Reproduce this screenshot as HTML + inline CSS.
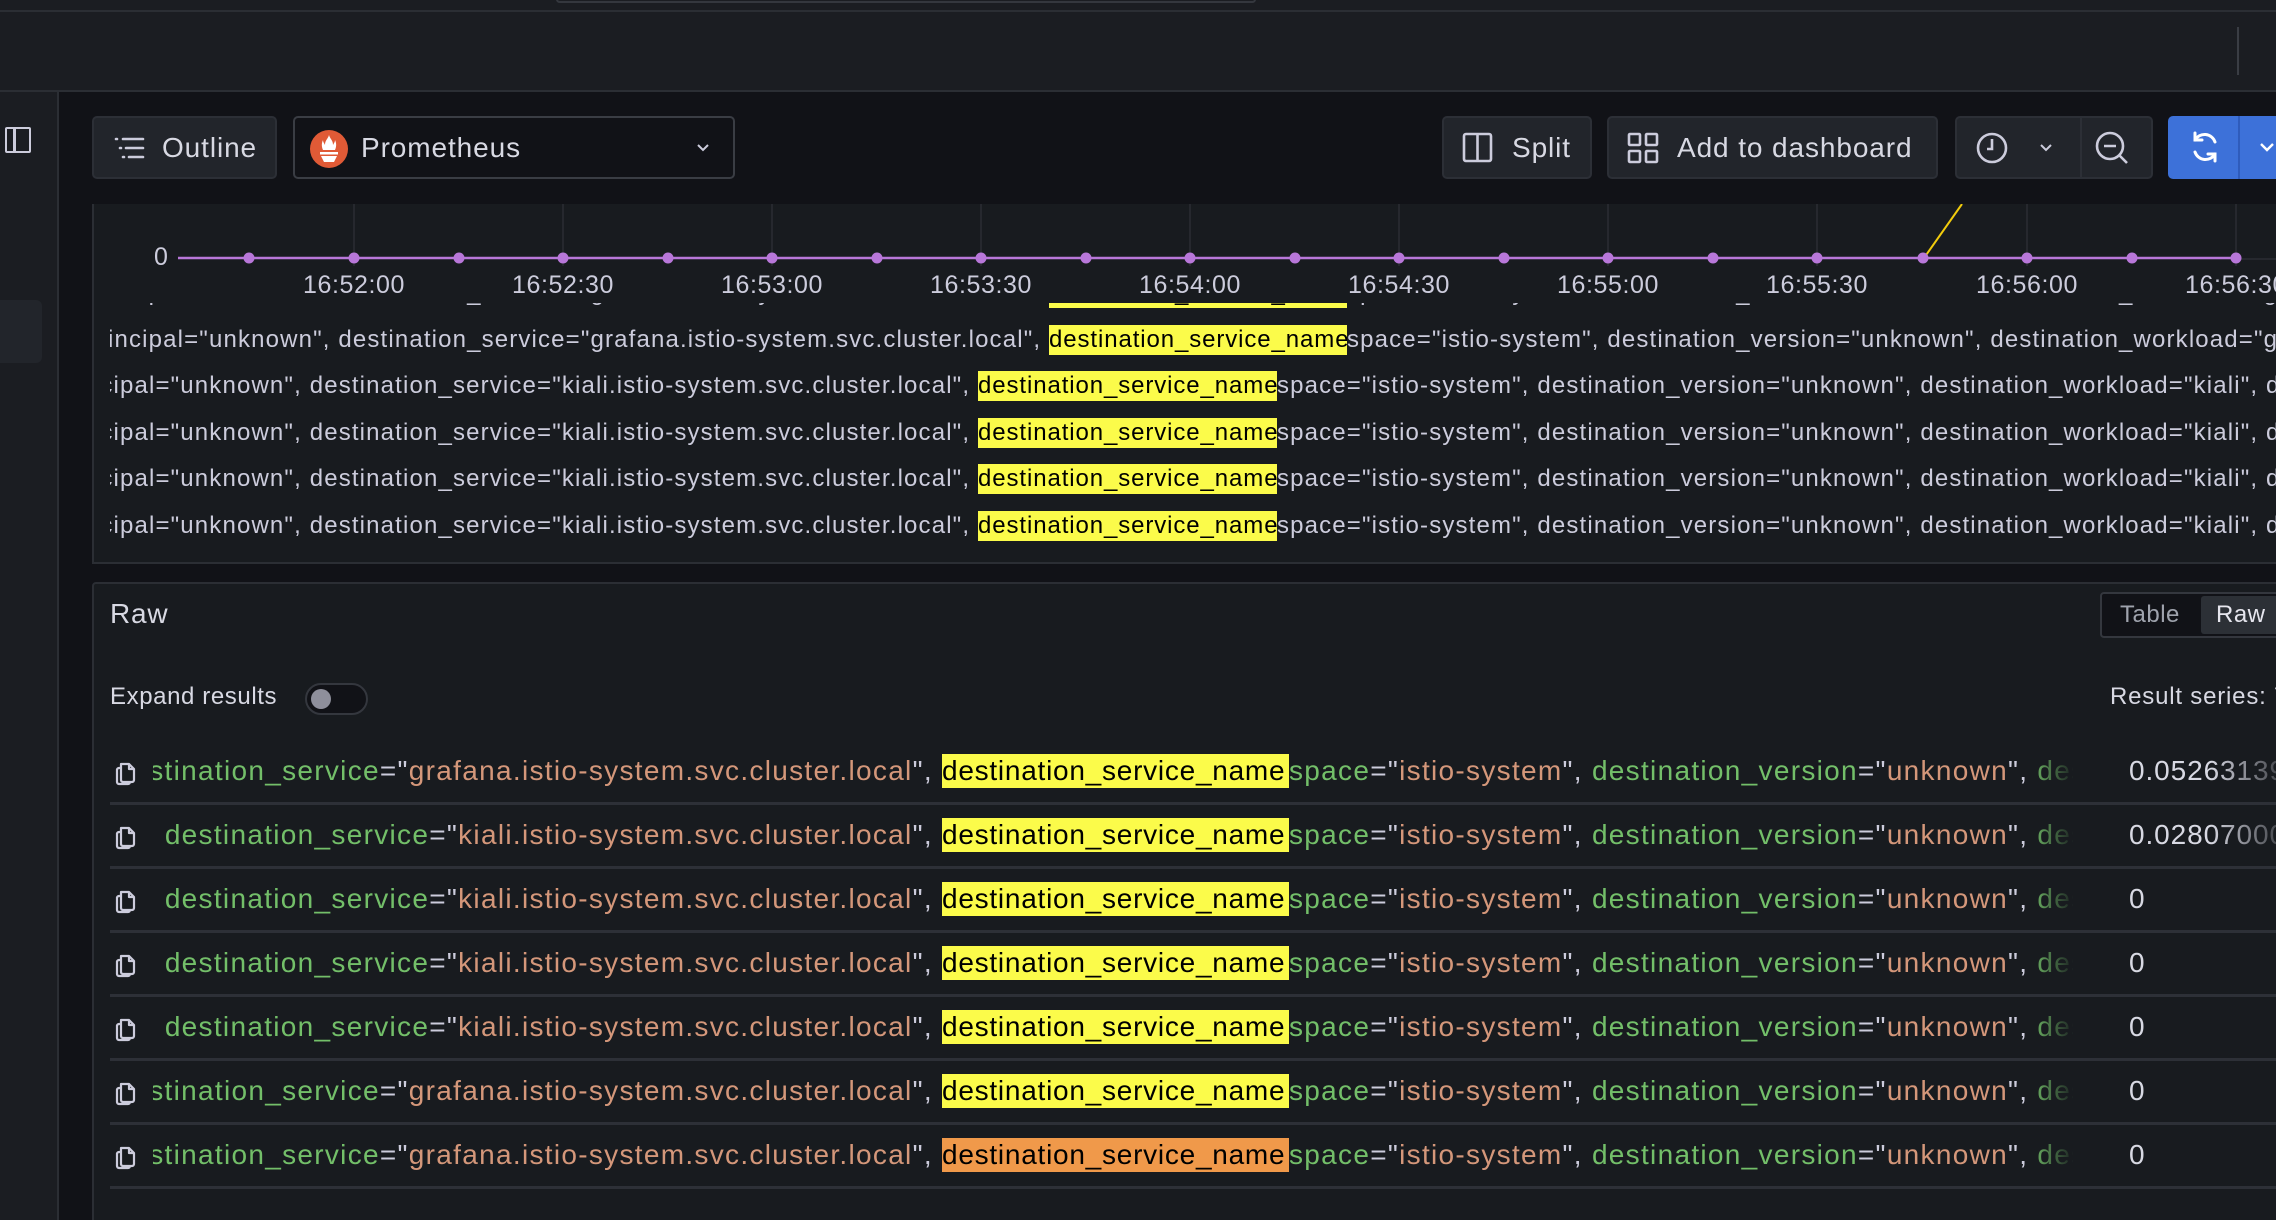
<!DOCTYPE html>
<html><head><meta charset="utf-8">
<style>
*{margin:0;padding:0;box-sizing:border-box}
html,body{width:2276px;height:1220px;overflow:hidden}
body{background:#111217;font-family:"Liberation Sans",sans-serif;color:#ccccdc;position:relative}
.a{position:absolute}
.btn{position:absolute;top:116px;height:63px;background:#22252b;border:2px solid #2c2f36;border-radius:5px;font-size:28px;color:#d8d9e3;letter-spacing:.9px}
.t{position:absolute;white-space:nowrap;overflow:hidden}
.lg{font-size:24px;letter-spacing:1.15px;color:#ccccdc;height:30px;line-height:30px}
.hl{background:#fbfb4a;color:#000;letter-spacing:.9px}
.rw{font-size:28px;letter-spacing:1.3px;height:34px;line-height:34px}
.rw.h2{letter-spacing:.75px}
.g{color:#73bf69}.v{color:#d4977a}.e{color:#ccccdc}
.sep{position:absolute;left:110px;right:0;height:3px;background:#2d3037}
.tick{position:absolute;top:271px;font-size:25px;color:#ccccdc;letter-spacing:.6px;transform:translateX(-50%)}
.val{position:absolute;left:2129px;font-size:28px;color:#d8d9e3;letter-spacing:.9px;white-space:nowrap}
</style></head><body>
<div class="a" style="left:0;top:0;width:2276px;height:92px;background:#1b1d22"></div>
<div class="a" style="left:556px;top:-4px;width:700px;height:7px;border:2px solid #34373e;border-radius:4px"></div>
<div class="a" style="left:0;top:10px;width:2276px;height:2px;background:#2b2e34"></div>
<div class="a" style="left:0;top:90px;width:2276px;height:2px;background:#2b2e34"></div>
<div class="a" style="left:2237px;top:27px;width:2px;height:48px;background:#3a3d44"></div>
<div class="a" style="left:0;top:92px;width:59px;height:1128px;background:#1b1d22;border-right:2px solid #2b2e34"></div>
<div class="a" style="left:5px;top:127px;width:26px;height:26px;border:2.5px solid #ccccdc;border-radius:2px"></div>
<div class="a" style="left:13px;top:128px;width:2.5px;height:24px;background:#ccccdc"></div>
<div class="a" style="left:0;top:300px;width:42px;height:63px;background:#22252b;border-radius:0 6px 6px 0"></div>

<div class="btn" style="left:92px;width:185px">
 <svg class="a" style="left:20px;top:18px" width="32" height="24" viewBox="0 0 32 24" fill="none" stroke="#ccccdc" stroke-width="2.6" stroke-linecap="round"><path d="M2 3h1M9 3h20M6 12h1M12 12h17M9 21h1M15 21h14"/></svg>
 <span class="a" style="left:68px;top:14px">Outline</span></div>
<div class="btn" style="left:293px;width:442px;background:#111217;border-color:#3a3d44">
 <svg class="a" style="left:14px;top:11px" width="40" height="40" viewBox="0 0 40 40"><circle cx="20" cy="20" r="19" fill="#e05a36"/><path d="M20 6c1 4 4 5 4 10 1-2 2-3 2-5 2 4 1 8 0 10H14c-1-2-2-6 0-10 0 2 1 3 2 5 0-5 3-6 4-10z" fill="#fff"/><rect x="11" y="23" width="18" height="2.5" fill="#fff"/><path d="M12 27h16l-3 6H15z" fill="#fff"/></svg>
 <span class="a" style="left:66px;top:14px">Prometheus</span>
 <svg class="a" style="left:400px;top:24px" width="16" height="12" viewBox="0 0 16 12" fill="none" stroke="#ccccdc" stroke-width="2"><path d="M3 3l5 5 5-5"/></svg></div>
<div class="btn" style="left:1442px;width:150px">
 <svg class="a" style="left:18px;top:14px" width="32" height="32" viewBox="0 0 32 32" fill="none" stroke="#ccccdc" stroke-width="2.6"><rect x="2" y="2" width="27" height="27" rx="2"/><path d="M15.5 2v27"/></svg>
 <span class="a" style="left:68px;top:14px">Split</span></div>
<div class="btn" style="left:1607px;width:331px">
 <svg class="a" style="left:18px;top:14px" width="32" height="32" viewBox="0 0 32 32" fill="none" stroke="#ccccdc" stroke-width="2.6"><rect x="2" y="2" width="11" height="11" rx="1"/><rect x="19" y="2" width="11" height="11" rx="1"/><rect x="2" y="19" width="11" height="11" rx="1"/><rect x="19" y="19" width="11" height="11" rx="1"/></svg>
 <span class="a" style="left:68px;top:14px">Add to dashboard</span></div>
<div class="btn" style="left:1955px;width:198px">
 <svg class="a" style="left:17px;top:12px" width="36" height="36" viewBox="0 0 36 36" fill="none" stroke="#ccccdc" stroke-width="2.6"><circle cx="18" cy="18" r="14"/><path d="M18 9v10h-5"/></svg>
 <svg class="a" style="left:81px;top:24px" width="16" height="12" viewBox="0 0 16 12" fill="none" stroke="#ccccdc" stroke-width="2"><path d="M3 3l5 5 5-5"/></svg>
 <div class="a" style="left:123px;top:0;width:2px;height:59px;background:#2c2f36"></div>
 <svg class="a" style="left:137px;top:12px" width="38" height="38" viewBox="0 0 38 38" fill="none" stroke="#ccccdc" stroke-width="2.6"><circle cx="16" cy="16" r="13"/><path d="M10 16h12M25 25l8 8"/></svg></div>
<div class="a" style="left:2168px;top:116px;width:120px;height:63px;background:#3d71d9;border-radius:5px"></div>
<div class="a" style="left:2238px;top:116px;width:2px;height:63px;background:#2f5cbc"></div>
<svg class="a" style="left:2188px;top:130px" width="34" height="34" viewBox="0 0 34 34" fill="none" stroke="#fff" stroke-width="3" stroke-linecap="round"><path d="M27 12A11 11 0 0 0 7 10M7 3v7h7M7 22a11 11 0 0 0 20 2M27 31v-7h-7"/></svg>
<svg class="a" style="left:2258px;top:141px" width="18" height="12" viewBox="0 0 18 12" fill="none" stroke="#fff" stroke-width="2.4"><path d="M3 3l6 6 6-6"/></svg>

<div class="a" style="left:92px;top:204px;width:2200px;height:360px;background:#181b1f;border-left:2px solid #2b2e34;border-bottom:2px solid #2b2e34"></div>
<svg class="a" style="left:0;top:204px" width="2276" height="100" viewBox="0 204 2276 100">
 <g stroke="#2a2d33" stroke-width="1.5">
  <path d="M354 204v62M563 204v62M772 204v62M981 204v62M1190 204v62M1399 204v62M1608 204v62M1817 204v62M2027 204v62M2236 204v62M2236 259H2276"/>
 </g>
 <path d="M178 258H2236" stroke="#b877d9" stroke-width="2.5"/>
 <path d="M1924 258L1962 204" stroke="#f2cc0c" stroke-width="2"/>
 <g fill="#b877d9">
  <circle cx="249" cy="258" r="5.5"/><circle cx="354" cy="258" r="5.5"/><circle cx="459" cy="258" r="5.5"/><circle cx="563" cy="258" r="5.5"/><circle cx="668" cy="258" r="5.5"/><circle cx="772" cy="258" r="5.5"/><circle cx="877" cy="258" r="5.5"/><circle cx="981" cy="258" r="5.5"/><circle cx="1086" cy="258" r="5.5"/><circle cx="1190" cy="258" r="5.5"/><circle cx="1295" cy="258" r="5.5"/><circle cx="1399" cy="258" r="5.5"/><circle cx="1504" cy="258" r="5.5"/><circle cx="1608" cy="258" r="5.5"/><circle cx="1713" cy="258" r="5.5"/><circle cx="1817" cy="258" r="5.5"/><circle cx="1923" cy="258" r="5.5"/><circle cx="2027" cy="258" r="5.5"/><circle cx="2132" cy="258" r="5.5"/><circle cx="2236" cy="258" r="5.5"/>
 </g>
</svg>
<div class="a" style="left:154px;top:243px;font-size:25px;color:#ccccdc">0</div>
<div class="tick" style="left:354px">16:52:00</div><div class="tick" style="left:563px">16:52:30</div><div class="tick" style="left:772px">16:53:00</div><div class="tick" style="left:981px">16:53:30</div><div class="tick" style="left:1190px">16:54:00</div><div class="tick" style="left:1399px">16:54:30</div><div class="tick" style="left:1608px">16:55:00</div><div class="tick" style="left:1817px">16:55:30</div><div class="tick" style="left:2027px">16:56:00</div><div class="tick" style="left:2236px;">16:56:30</div>

<div class="a" style="left:94px;top:303px;width:2182px;height:258px;overflow:hidden">
 <div class="a" style="left:0;top:-43px;width:2182px;height:300px" id="lgwrap"></div>
</div>

<div class="a" style="left:92px;top:582px;width:2200px;height:650px;background:#181b1f;border:2px solid #2b2e34;border-radius:4px"></div>
<div class="a" style="left:110px;top:598px;font-size:28px;color:#d8d9e3;letter-spacing:.8px">Raw</div>
<div class="a" style="left:2100px;top:592px;width:200px;height:46px;border:2px solid #34373e;border-radius:4px;background:#111217"></div>
<div class="a" style="left:2120px;top:601px;font-size:24px;color:#9fa3ad;letter-spacing:.5px">Table</div>
<div class="a" style="left:2201px;top:596px;width:80px;height:38px;background:#2c3036;border-radius:3px"></div>
<div class="a" style="left:2216px;top:601px;font-size:24px;color:#e6e6ee;letter-spacing:.5px">Raw</div>
<div class="a" style="left:110px;top:683px;font-size:24px;color:#d8d9e3;letter-spacing:.6px">Expand results</div>
<div class="a" style="left:305px;top:683px;width:63px;height:32px;border:2px solid #34373e;border-radius:16px;background:#111217"></div>
<div class="a" style="left:311px;top:689px;width:20px;height:20px;border-radius:50%;background:#8e8f9b"></div>
<div class="a" style="left:2110px;top:683px;font-size:24px;color:#d8d9e3;letter-spacing:.8px;white-space:nowrap">Result series: 7</div>

<div class="sep" style="top:802px"></div><div class="sep" style="top:866px"></div><div class="sep" style="top:930px"></div><div class="sep" style="top:994px"></div><div class="sep" style="top:1058px"></div><div class="sep" style="top:1122px"></div><div class="sep" style="top:1186px"></div>

<div id="rows"></div>

<script>
var L=[["grafana",18],["grafana",65],["kiali",111],["kiali",158],["kiali",204],["kiali",251]];
var s="";
L.forEach(function(r){
 var g=r[0]=="grafana", hx=g?955:884, y=r[1];
 s+='<div class="t lg" style="left:16px;top:'+y+'px;width:'+(hx-16)+'px;text-align:right;direction:rtl"><span style="direction:ltr;unicode-bidi:embed">destination_principal="unknown", destination_service="'+r[0]+'.istio-system.svc.cluster.local",&nbsp;</span></div>';
 s+='<div class="t lg hl" style="left:'+hx+'px;top:'+y+'px;width:'+(g?298:299)+'px">destination_service_name</div>';
 s+='<div class="t lg" style="left:'+(hx+(g?298:299))+'px;top:'+y+'px;width:1000px">space="istio-system", destination_version="unknown", destination_workload="'+r[0]+'", destination</div>';
});
document.getElementById("lgwrap").innerHTML=s;
var rows=[["grafana",771,"0.05263139"],["kiali",835,"0.02807000"],["kiali",899,"0"],["kiali",963,"0"],["kiali",1027,"0"],["grafana",1091,"0"],["grafana",1155,"0"]];
var h="";
rows.forEach(function(r,i){
 var y=r[1]-17, hc=i==6?"#f0994a":"#fbfb4a";
 h+='<svg class="a" style="left:114px;top:'+(r[1]-11)+'px" width="26" height="26" viewBox="0 0 26 26" fill="none" stroke="#ccccdc" stroke-width="2.2" stroke-linejoin="round"><path d="M7 4h8l5 5v11a2 2 0 0 1-2 2H9a2 2 0 0 1-2-2z"/><path d="M15 4v5h5"/><path d="M7 8H5a2 2 0 0 0-2 2v12a2 2 0 0 0 2 2h9a2 2 0 0 0 2-2"/></svg>';
 h+='<div class="t rw" style="left:153px;top:'+y+'px;width:789px;text-align:right;direction:rtl"><span style="direction:ltr;unicode-bidi:embed"><span class="g">destination_principal</span><span class="e">="</span><span class="v">unknown</span><span class="e">", </span><span class="g">destination_service</span><span class="e">="</span><span class="v">'+r[0]+'.istio-system.svc.cluster.local</span><span class="e">",&nbsp;</span></span></div>';
 h+='<div class="t rw h2" style="left:942px;top:'+y+'px;width:347px;background:'+hc+';color:#000">destination_service_name</div>';
 h+='<div class="t rw" style="left:1289px;top:'+y+'px;width:784px"><span class="g">space</span><span class="e">="</span><span class="v">istio-system</span><span class="e">", </span><span class="g">destination_version</span><span class="e">="</span><span class="v">unknown</span><span class="e">", </span><span class="g">destination_workload</span></div>';
 h+='<div class="a" style="left:2030px;top:'+y+'px;width:45px;height:34px;background:linear-gradient(90deg,rgba(24,27,31,0),#181b1f)"></div>';
 h+='<div class="val" style="top:'+y+'px;line-height:34px">'+r[2]+'</div>';
 if(i<2)h+='<div class="a" style="left:2210px;top:'+y+'px;width:66px;height:34px;background:linear-gradient(90deg,rgba(24,27,31,0),rgba(24,27,31,.75))"></div>';
});
document.getElementById("rows").innerHTML=h;
</script>
</body></html>
